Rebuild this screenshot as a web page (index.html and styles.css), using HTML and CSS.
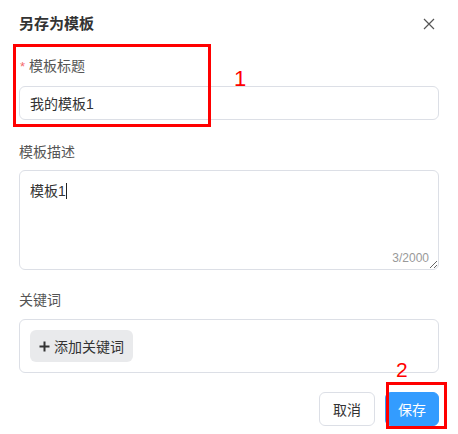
FILE: index.html
```html
<!DOCTYPE html>
<html lang="zh-CN">
<head>
  <meta charset="UTF-8" />
  <meta name="viewport" content="width=device-width, initial-scale=1" />
  <title>另存为模板</title>
  <link rel="stylesheet" href="styles.css">
</head>
<body>

<div class="dialog">
  <div class="dialog-header">
    <span class="dialog-title">另存为模板</span>
    <svg class="close" width="12" height="12" viewBox="0 0 12 12">
      <path d="M1 1 L11 11 M11 1 L1 11" stroke="#555" stroke-width="1.2" fill="none" />
    </svg>
  </div>

  <form class="form">
    <div class="field field-title">
      <label class="field-label"><span class="required">*</span>模板标题</label>
      <input class="text-input" type="text" value="我的模板1" />
    </div>

    <div class="field field-desc">
      <label class="field-label">模板描述</label>
      <div class="textarea-wrap">
        <textarea class="text-area">模板1</textarea>
        <span class="caret"></span>
        <span class="count">3/2000</span>
      </div>
    </div>

    <div class="field field-keys">
      <label class="field-label">关键词</label>
      <div class="keyword-box">
        <button type="button" class="add-key">
          <svg width="11" height="11" viewBox="0 0 11 11">
            <path d="M5.5 0.5 V10.5 M0.5 5.5 H10.5" stroke="#333" stroke-width="2" fill="none" />
          </svg>
          添加关键词
        </button>
      </div>
    </div>

    <div class="dialog-footer">
      <button type="button" class="btn">取消</button>
      <button type="submit" class="btn btn-primary">保存</button>
    </div>
  </form>
</div>

<!-- annotations -->
<div class="mark mark-1"></div>
<span class="mark-num num-1">1</span>
<div class="mark mark-2"></div>
<span class="mark-num num-2">2</span>

</body>
</html>
```

FILE: styles.css
```css
body {
  margin: 0;
  background: #fff;
  font-family: "Liberation Sans", "Noto Sans CJK SC", sans-serif;
  color: #333;
}
.dialog {
  position: relative;
  padding: 14px 19px 0 19px;
}
.dialog-header {
  display: flex;
  justify-content: space-between;
  align-items: center;
  height: 20px;
  padding-right: 4px;
}
.dialog-title {
  font-size: 15px;
  font-weight: 700;
  line-height: 20px;
  color: #333;
}
.close {
  display: block;
}
.field-title {
  margin-top: 22px;
}
.field-desc {
  margin-top: 22px;
}
.field-keys {
  margin-top: 20px;
}
.field-label {
  display: block;
  font-size: 14px;
  line-height: 20px;
  color: #555;
  margin-bottom: 9px;
}
.field-desc .field-label {
  margin-bottom: 8px;
}
.required {
  color: #f56c6c;
  font-size: 13px;
  margin: 0 4px 0 1px;
}
.text-input, .text-area {
  display: block;
  width: 100%;
  box-sizing: border-box;
  border: 1px solid #dcdfe6;
  border-radius: 6px;
  font-family: inherit;
  font-size: 14px;
  color: #333;
  outline: none;
}
.text-input {
  height: 34px;
  padding: 0 10px;
}
.textarea-wrap {
  position: relative;
}
.text-area {
  height: 100px;
  padding: 10px 10px;
  line-height: 20px;
  resize: vertical;
}
.caret {
  position: absolute;
  left: 47px;
  top: 13px;
  width: 1px;
  height: 16px;
  background: #222;
}
.count {
  position: absolute;
  right: 10px;
  bottom: 5px;
  font-size: 12px;
  line-height: 14px;
  color: #999;
}
.keyword-box {
  border: 1px solid #dcdfe6;
  border-radius: 6px;
  padding: 10px;
}
.add-key {
  display: flex;
  align-items: center;
  gap: 4px;
  height: 32px;
  padding: 0 9px 0 9px;
  border: none;
  border-radius: 6px;
  background: #e9eaec;
  font-family: inherit;
  font-size: 14px;
  color: #333;
}
.dialog-footer {
  display: flex;
  justify-content: flex-end;
  gap: 10px;
  margin-top: 19px;
}
.btn {
  height: 34px;
  padding: 0 13px;
  border: 1px solid #dcdfe6;
  border-radius: 6px;
  background: #fff;
  font-family: inherit;
  font-size: 14px;
  color: #333;
}
.btn-primary {
  padding: 0 12px;
  background: #339cff;
  border-color: #339cff;
  color: #fff;
}
.mark {
  position: absolute;
  border: 3px solid #ff0000;
  box-sizing: border-box;
}
.mark-1 {
  left: 13px;
  top: 44px;
  width: 198px;
  height: 83px;
}
.mark-2 {
  left: 386px;
  top: 382px;
  width: 61px;
  height: 47px;
}
.mark-num {
  position: absolute;
  color: #ff0000;
  line-height: 1;
  font-family: "Liberation Sans", sans-serif;
}
.num-1 {
  left: 234px;
  top: 68px;
  font-size: 22px;
}
.num-2 {
  left: 396px;
  top: 359px;
  font-size: 21px;
}
```
